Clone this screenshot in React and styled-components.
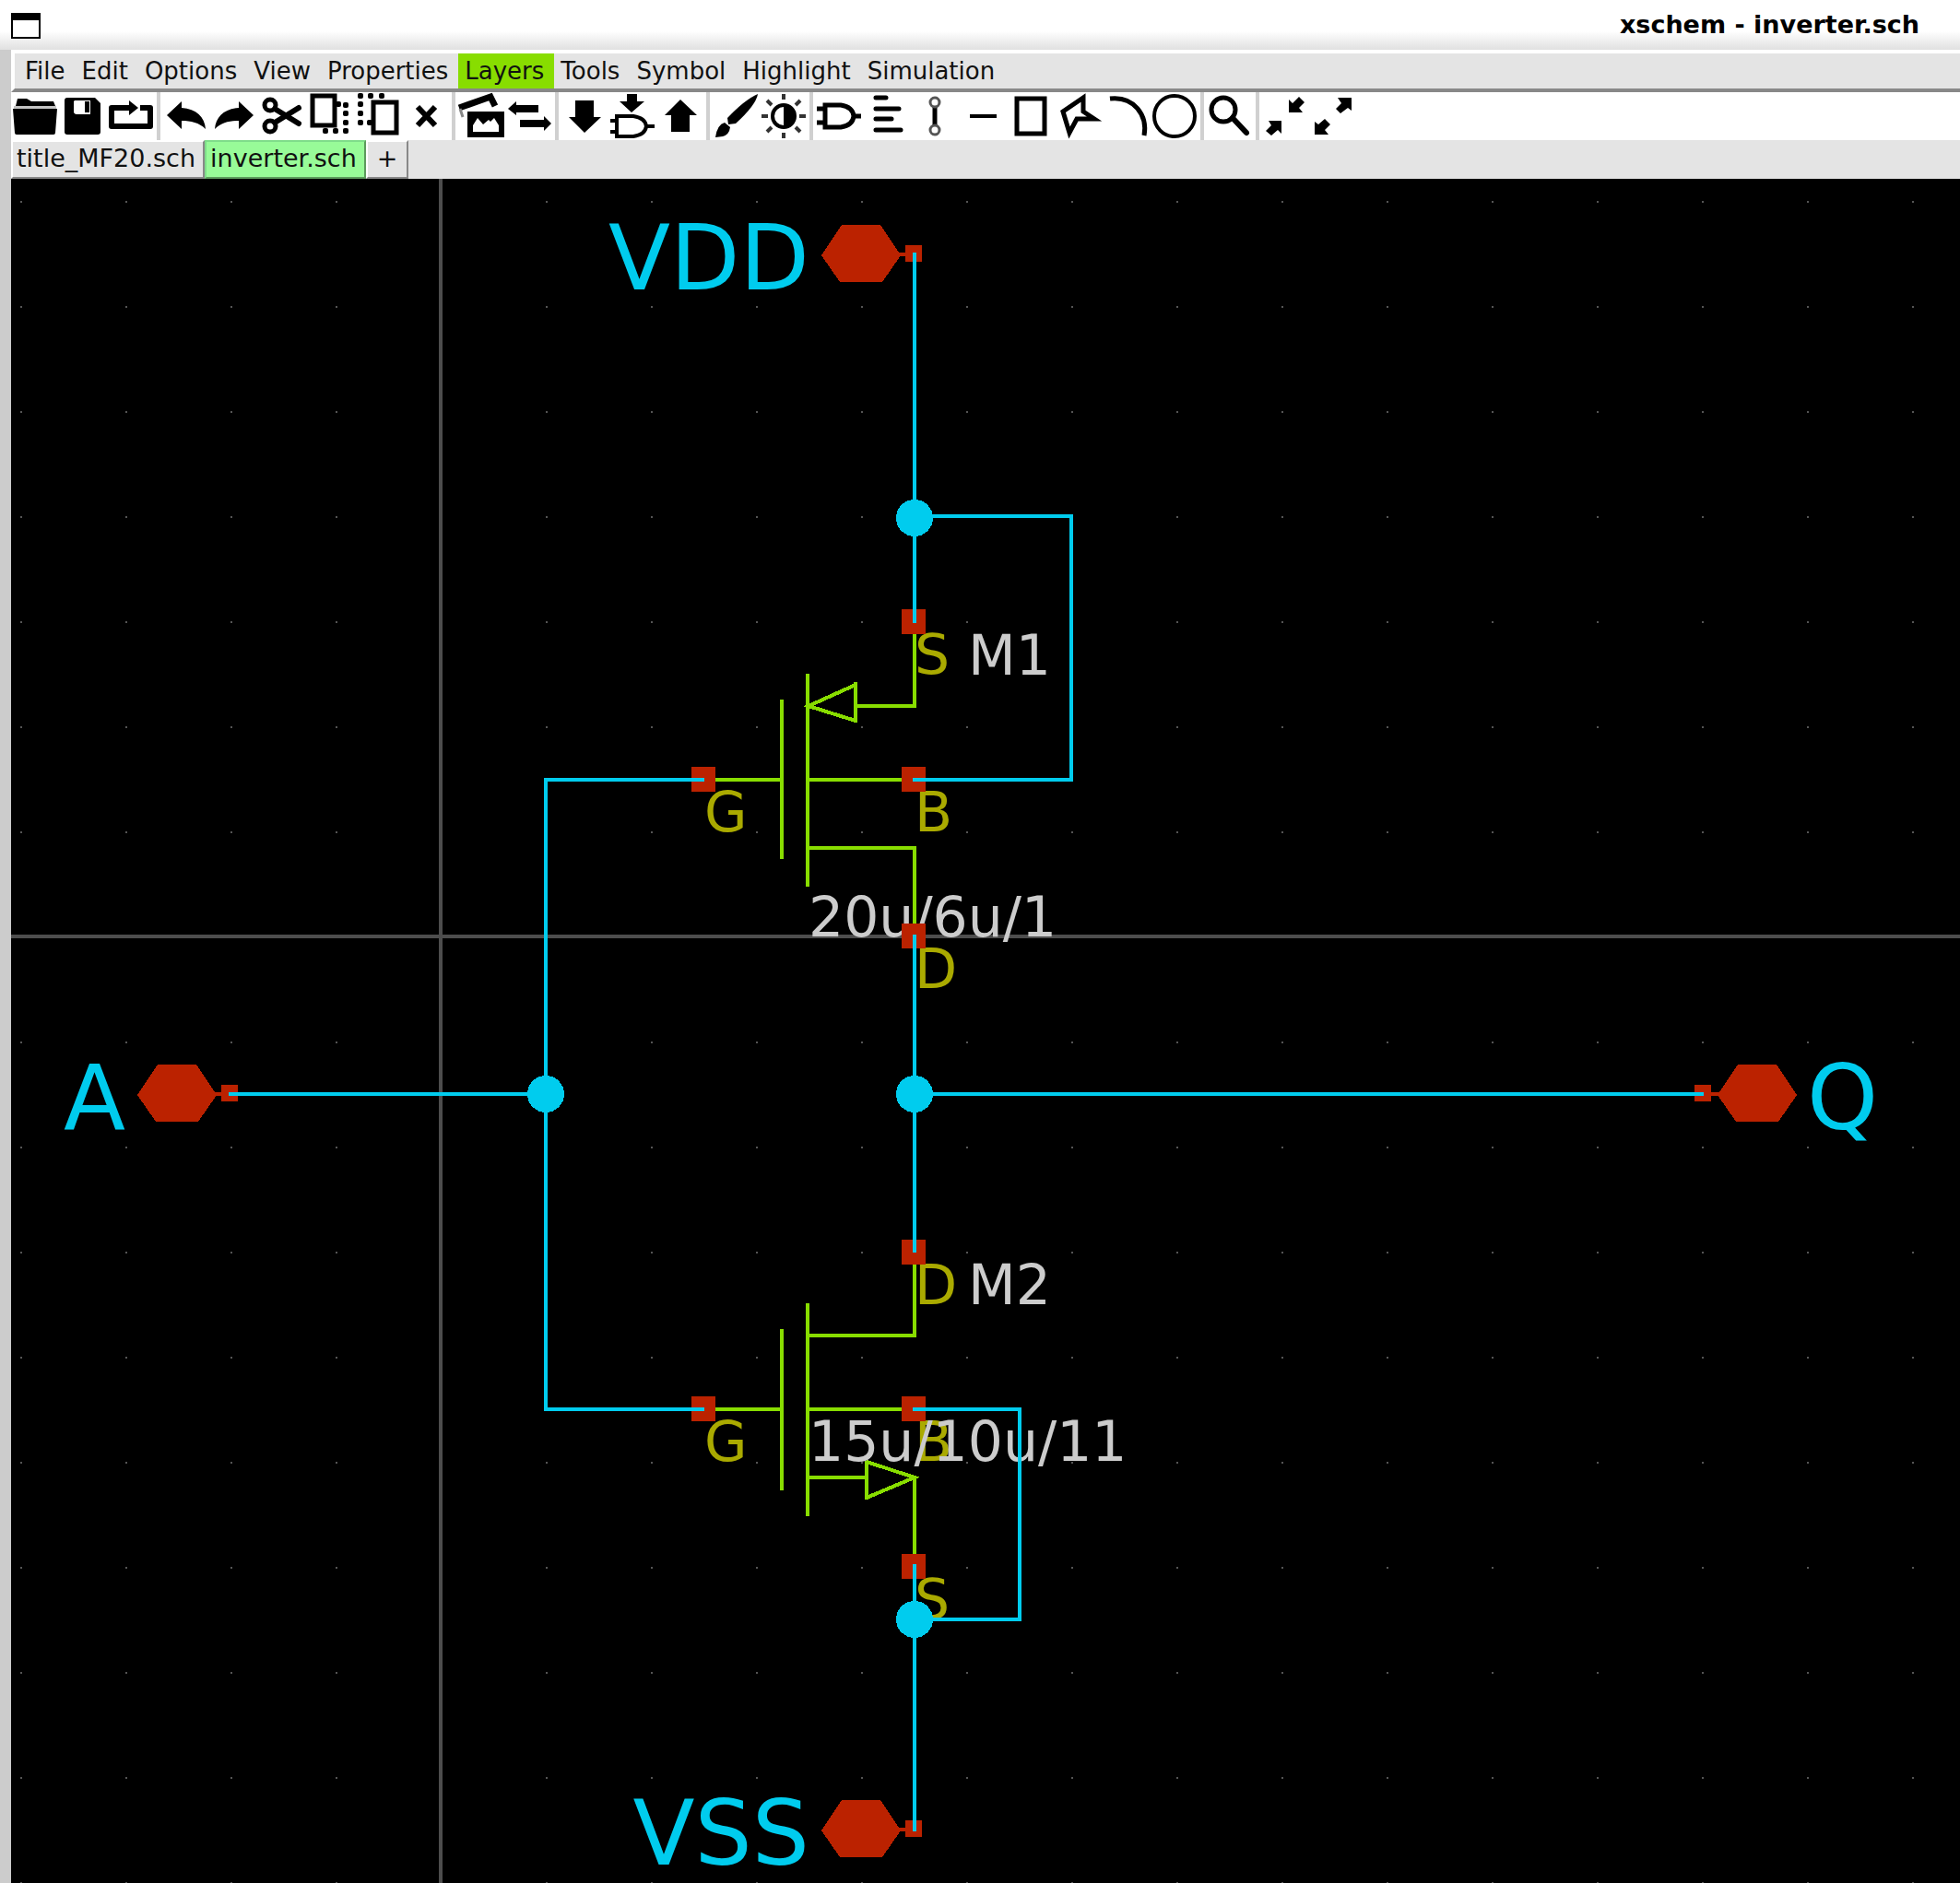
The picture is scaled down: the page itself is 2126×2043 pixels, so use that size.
import React from 'react';
import styled, { createGlobalStyle } from 'styled-components';

const color = {
  wire: '#00ccee',
  pin: '#bb2200',
  symbol: '#88dd00',
  pinLabel: '#aaaa00',
  label: '#cccccc',
  axis: '#4d4d4d',
  chrome: '#e4e4e4',
  shadow: '#888888',
};

const GlobalStyle = createGlobalStyle`
  *, *::before, *::after { box-sizing: border-box; }
  body { margin: 0; background: #000; }
`;

const Window = styled.div`
  display: flex;
  flex-direction: column;
  min-height: 100vh;
  font-family: 'DejaVu Sans', sans-serif;
  font-size: 26px;
  line-height: 36px;
  color: #111;
`;

const TitleBar = styled.header`
  display: flex;
  align-items: flex-start;
  justify-content: space-between;
  height: 54px;
  padding: 11px 44px 0 12px;
  background: linear-gradient(#fff 34px, #f2f2f2 42px, #e0e0e0 54px);
`;

const WindowButton = styled.button`
  width: 32px;
  height: 28px;
  margin: 3px 0 0;
  padding: 0;
  background: #fff;
  border: 2px solid #000;
  border-top-width: 8px;
`;

const Title = styled.h1`
  margin: 0;
  font: bold 27px/32px 'DejaVu Sans', sans-serif;
  color: #000;
`;

const Frame = styled.main`
  display: flex;
  flex: 1;
  flex-direction: column;
  border-left: 12px solid #cccccc;
`;

const MenuBar = styled.nav`
  display: flex;
  height: 46px;
  padding-left: 4px;
  background: ${color.chrome};
  border: 4px solid #fff;
  border-right: 0;
  border-bottom-color: ${color.shadow};
`;

const MenuItem = styled.button`
  height: 38px;
  padding: 0 11px 0 7px;
  border: 0;
  background: ${(p) => (p.$active ? color.symbol : 'transparent')};
  font: inherit;
  color: inherit;
`;

const Toolbar = styled.div`
  display: flex;
  height: 52px;
  background: #fff;
`;

const ToolGroup = styled.div`
  display: flex;
  padding: 0 2px 0 ${(p) => (p.$first ? 0 : 2)}px;
  border-right: ${(p) => (p.$last ? 0 : 4)}px solid #d0d0d0;
`;

const ToolButton = styled.button`
  width: 52px;
  height: 52px;
  padding: 0;
  border: 0;
  background: transparent;

  svg { display: block; width: 52px; height: 52px; }
`;

const TabBar = styled.div`
  display: flex;
  height: 42px;
  background: ${color.chrome};
`;

const Tab = styled.button`
  height: 42px;
  padding: ${(p) => (p.$wide ? '0 10px 2px' : '0 8px 4px 4px')};
  border: 2px solid;
  border-color: ${(p) => (p.$active ? '#7fdd8a #5c9a5c #5c9a5c #7fdd8a' : '#fff #888 #888 #fff')};
  background: ${(p) => (p.$active ? '#98fb98' : color.chrome)};
  font: inherit;
  font-size: 27px;
  color: inherit;
`;

const Canvas = styled.section`
  flex: 1;
  background: #000;

  svg { display: block; width: 100%; }
  text { font-family: 'DejaVu Sans', sans-serif; }
`;

const K = '#000';
const line = (w) => ({ fill: 'none', stroke: K, strokeWidth: w });
const dots = (pts) => pts.map(([x, y]) => <rect key={`${x}-${y}`} x={x - 3} y={y - 3} width="6" height="6" rx="2" />);
const gate = 'M11 14H28Q41 16 42 26Q41 36 28 38H11Z';

const icons = {
  Open: (
    <>
      <path d="M5 15L7 7H17L22 10H46L48 15Z" />
      <path d="M3 15H49V18H3Z" fill="#c4c4c4" />
      <path d="M2 18H50L48 44Q48 46 46 46H6Q4 46 4 44Z" />
    </>
  ),
  Save: (
    <>
      <path d="M9 6H39L45 12V43Q45 46 42 46H9Q6 46 6 43V9Q6 6 9 6Z" />
      <path d="M17 9H34V24H19Q17 24 16 22V10Z" fill="#fff" />
      <rect x="28" y="10" width="5" height="12" />
    </>
  ),
  Reload: (
    <>
      <path d="M36 17H47V37H5V17H26" {...line(6)} strokeLinejoin="round" />
      <path d="M24 9L34 17L24 25Z" />
    </>
  ),
  Undo: <path d="M5 25L21 10V17C37 18 46 27 47 40C40 33 31 31 21 31V40Z" />,
  Redo: <path d="M47 25L31 10V17C15 18 6 27 5 40C12 33 21 31 31 31V40Z" />,
  Cut: (
    <>
      <circle cx="13" cy="14" r="6" {...line(5)} />
      <circle cx="13" cy="37" r="6" {...line(5)} />
      <path d="M18 18L44 34M18 33L44 17" {...line(6)} strokeLinecap="round" />
    </>
  ),
  Copy: (
    <>
      <rect x="7" y="4" width="24" height="32" {...line(5)} />
      {dots([[35, 13], [43, 14], [43, 23], [43, 33], [43, 42], [32, 42], [21, 42]])}
    </>
  ),
  Paste: (
    <>
      {dots([[7, 4], [18, 4], [30, 4], [7, 13], [7, 23], [7, 33], [17, 33]])}
      <rect x="21" y="11" width="25" height="33" fill="#fff" stroke={K} strokeWidth="5" />
    </>
  ),
  Delete: <path d="M17 16L36 36M36 16L17 36" {...line(6)} />,
  'Insert image': (
    <>
      <path d="M2 17L36 5L41 15" {...line(7)} />
      <path d="M3 18L6 27" stroke="#888" strokeWidth="3" />
      <path d="M11 21H51V49H11Z" />
      <path d="M17 43V36L22 28L28 35L34 30L36 32L40 28L45 36V43Z" fill="#fff" />
    </>
  ),
  Swap: (
    <>
      <path d="M3 18L12 10V14H36V22H12V25Z" />
      <path d="M50 34L42 26V30H16V38H42V42Z" />
    </>
  ),
  Descend: <path d="M16 9H36V27H44L26 44L9 27H16Z" />,
  'Descend into symbol': (
    <>
      <path d="M20 2H31V10H39L25 22L12 10H20Z" />
      <path d="M9 26H27Q40 28 41 37Q40 46 27 48H9Z" {...line(4)} />
      <path d="M2 31H9M2 43H9M41 37H50" {...line(4)} />
    </>
  ),
  Ascend: <path d="M16 43H36V25H44L26 8L9 25H16Z" />,
  Brush: (
    <>
      <path d="M50 2Q48 14 26 34L18 35L17 28Q36 8 50 2Z" />
      <path d="M14 33L20 38Q19 46 12 48L4 49Q6 35 14 33Z" />
    </>
  ),
  Contrast: (
    <>
      <circle cx="26" cy="26" r="12" {...line(4)} />
      <path d="M26 14A12 12 0 0 1 26 38Z" />
      <path d="M26 2V8M26 44V50M2 26H9M43 26H50M8 9L13 14M44 9L39 14M8 43L13 38M44 43L39 38" stroke="#333" strokeWidth="4" />
    </>
  ),
  'Insert symbol': (
    <>
      <path d={gate} {...line(5)} />
      <path d="M2 18H11M2 33H11M41 26H50" {...line(5)} />
    </>
  ),
  'Insert text': <path d="M14 6H25M14 18H39M14 29H31M14 41H41" {...line(5)} strokeLinecap="round" />,
  Wire: (
    <>
      <path d="M26 15V36" {...line(5)} />
      <circle cx="26" cy="11" r="5" fill="#fff" stroke="#555" strokeWidth="3" />
      <circle cx="26" cy="41" r="5" fill="#fff" stroke="#555" strokeWidth="3" />
    </>
  ),
  Line: <path d="M12 26H41" {...line(4)} />,
  Rectangle: <rect x="11" y="7" width="30" height="38" {...line(5)} />,
  Polygon: <path d="M31 6V21L43 29H24L16 44L9 21Z" {...line(5)} />,
  Arc: <path d="M8 7C34 4 49 25 45 47" {...line(5)} />,
  Circle: <circle cx="26" cy="26" r="22" {...line(4)} />,
  Search: (
    <>
      <circle cx="19" cy="19" r="13" {...line(5)} />
      <path d="M29 28L44 44" {...line(6)} strokeLinecap="round" />
    </>
  ),
  'Zoom box': (
    <>
      <path d="M30 22V8L34 12L41 5L47 11L41 17L45 22Z" />
      <path d="M22 31V45L18 41L11 47L5 42L11 36L8 31Z" />
    </>
  ),
  'Zoom full': (
    <>
      <path d="M46 6V20L42 17L34 23L29 18L35 12L31 6Z" />
      <path d="M6 46V32L10 35L17 29L23 35L17 41L21 46Z" />
    </>
  ),
};

const toolGroups = [
  ['Open', 'Save', 'Reload'],
  ['Undo', 'Redo', 'Cut', 'Copy', 'Paste', 'Delete'],
  ['Insert image', 'Swap'],
  ['Descend', 'Descend into symbol', 'Ascend'],
  ['Brush', 'Contrast'],
  ['Insert symbol', 'Insert text', 'Wire', 'Line', 'Rectangle', 'Polygon', 'Arc', 'Circle'],
  ['Search'],
  ['Zoom box', 'Zoom full'],
];

const menus = ['File', 'Edit', 'Options', 'View', 'Properties', 'Layers', 'Tools', 'Symbol', 'Highlight', 'Simulation'];

function Port({ x, y, flip, name }) {
  const s = flip ? -1 : 1;
  const p = (dx, dy) => `${x + s * dx},${y + dy}`;
  return (
    <g fill={color.pin}>
      <polygon
        points={[p(-101, 1), p(-79, -32), p(-37, -32), p(-15, 1), p(-35, 30), p(-81, 30)].join(' ')}
      />
      <path d={`M${p(-18, 0)}H${x}`} stroke={color.pin} strokeWidth="4" />
      <rect x={x - 10} y={y - 10} width="18" height="18" />
      <text x={flip ? x + 112 : x - 114} y={y + 38} fontSize="98" textAnchor={flip ? 'start' : 'end'} fill={color.wire}>
        {name}
      </text>
    </g>
  );
}

function Pin({ x, y, name }) {
  return (
    <g>
      <text x={x} y={y + 56} fontSize="60" fill={color.pinLabel}>{name}</text>
      <rect x={x - 14} y={y - 14} width="26" height="27" fill={color.pin} />
    </g>
  );
}

function Schematic() {
  const columns = Array.from({ length: 19 }, (_, i) => 22 + i * 114);
  const rows = Array.from({ length: 17 }, (_, i) => 218 + i * 114);
  return (
    <svg viewBox="12 194 2114 1849" shapeRendering="crispEdges" role="img" aria-label="Inverter schematic">
      <g fill="#555">
        {rows.map((y) => columns.map((x) => <rect key={`${x}-${y}`} x={x} y={y} width="2" height="2" />))}
      </g>
      <path d="M478 194V2043M12 1016H2126" stroke={color.axis} strokeWidth="4" />

      <g fontSize="60" fill={color.label}>
        <text x="1050" y="732">M1</text>
        <text x="877" y="1016">20u/6u/1</text>
        <text x="1050" y="1415">M2</text>
      </g>

      <g fill="none" stroke={color.symbol} strokeWidth="4">
        <path d="M992 674V766H928M928 740V784M928 743L877 766L928 782M876 731V962M848 759V932M764 846H848M876 846H990M876 920H992V1014" />
        <path d="M992 1358V1449H876M876 1414V1645M848 1442V1617M764 1529H848M876 1529H990M876 1603H940M940 1585V1627M940 1586L992 1603L940 1625M992 1602V1698" />
      </g>

      <Pin x={992} y={675} name="S" />
      <Pin x={764} y={846} name="G" />
      <Pin x={992} y={846} name="B" />
      <Pin x={992} y={1016} name="D" />
      <Pin x={992} y={1359} name="D" />
      <Pin x={764} y={1529} name="G" />
      <Pin x={992} y={1529} name="B" />
      <Pin x={992} y={1700} name="S" />
      <text x="877" y="1585" fontSize="60" fill={color.label}>15u/10u/11</text>

      <Port x={992} y={276} name="VDD" />
      <Port x={250} y={1187} name="A" />
      <Port x={992} y={1985} name="VSS" />
      <Port x={1848} y={1187} name="Q" flip />

      <path
        d="M992 274V676M992 560H1162V846H990M992 1014V1359M248 1187H592M764 846H592V1529H764M992 1187H1848M990 1529H1106V1757H992M992 1697V1987"
        fill="none"
        stroke={color.wire}
        strokeWidth="4"
      />
      <g fill={color.wire}>
        <circle cx="992" cy="562" r="20" />
        <circle cx="592" cy="1187" r="20" />
        <circle cx="992" cy="1187" r="20" />
        <circle cx="992" cy="1757" r="20" />
      </g>
    </svg>
  );
}

export default function App() {
  return (
    <Window>
      <GlobalStyle />
      <TitleBar>
        <WindowButton type="button" aria-label="Window menu" />
        <Title>xschem - inverter.sch</Title>
      </TitleBar>
      <Frame>
        <MenuBar>
          {menus.map((name) => (
            <MenuItem key={name} type="button" $active={name === 'Layers'}>{name}</MenuItem>
          ))}
        </MenuBar>
        <Toolbar role="toolbar">
          {toolGroups.map((group, i) => (
            <ToolGroup key={group[0]} $first={i === 0} $last={i === toolGroups.length - 1}>
              {group.map((name) => (
                <ToolButton key={name} type="button" aria-label={name}>
                  <svg viewBox="0 0 52 52" aria-hidden="true">{icons[name]}</svg>
                </ToolButton>
              ))}
            </ToolGroup>
          ))}
        </Toolbar>
        <TabBar>
          <Tab type="button">title_MF20.sch</Tab>
          <Tab type="button" $active>inverter.sch</Tab>
          <Tab type="button" $wide>+</Tab>
        </TabBar>
        <Canvas>
          <Schematic />
        </Canvas>
      </Frame>
    </Window>
  );
}
